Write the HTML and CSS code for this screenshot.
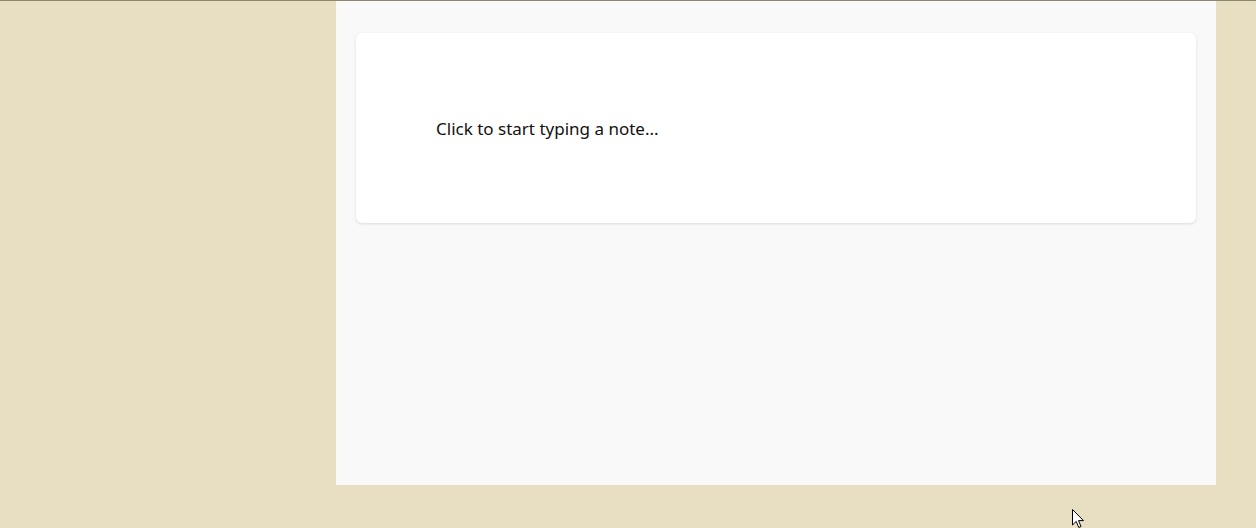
FILE: index.html
```html
<!DOCTYPE html>
<html>
<head>
<meta charset="utf-8">
<link rel="stylesheet" href="styles.css">
</head>
<body>
<div class="page">
  <main class="panel">
    <div class="card">
      <div class="note">Click to start typing a note...</div>
    </div>
  </main>
</div>
<svg class="cursor" width="14" height="20" viewBox="0 0 14 20">
  <path d="M0.5 0.5 L0.5 16 L4.2 12.4 L6.8 18.5 L9 17.5 L6.5 11.6 L11.5 11.6 Z" fill="#fff" stroke="#000" stroke-width="1"/>
</svg>
</body>
</html>
```
FILE: styles.css
```css
html, body {
  margin: 0;
  height: 100%;
}
body {
  background: #e8dfc3;
  border-top: 1px solid #8c8870;
  box-sizing: border-box;
  font-family: "Noto Sans", "Open Sans", sans-serif;
  overflow: hidden;
}
.page {
  display: flex;
  padding-left: 336px;
}
.panel {
  width: 880px;
  height: 484px;
  background: #f9f9f9;
  box-sizing: border-box;
  padding: 32px 20px 0 20px;
}
.card {
  height: 190px;
  background: #fff;
  border-radius: 6px;
  box-shadow: 0 1px 3px rgba(0,0,0,0.12);
  display: flex;
  align-items: center;
  padding-left: 80px;
  box-sizing: border-box;
}
.note {
  font-size: 17px;
  color: #111;
  margin-top: 0;
}
.cursor {
  position: absolute;
  left: 1072px;
  top: 509px;
}
```
